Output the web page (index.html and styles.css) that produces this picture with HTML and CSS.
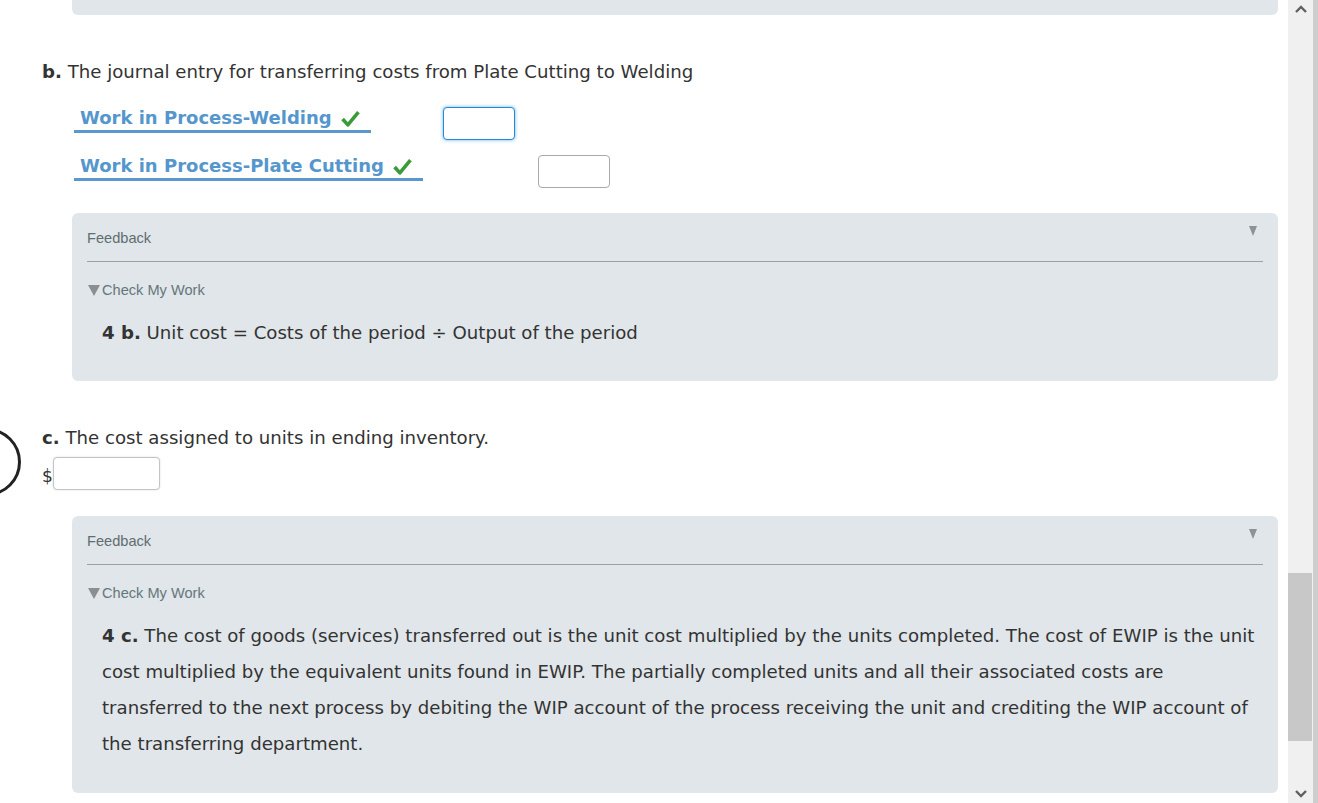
FILE: index.html
```html
<!DOCTYPE html>
<html>
<head>
<meta charset="utf-8">
<link rel="stylesheet" href="styles.css">
</head>
<body>
<div class="window">
  <div class="content">
    <div class="box-top"></div>

    <p class="question q-b"><b>b.</b> The journal entry for transferring costs from Plate Cutting to Welding</p>
    <div class="journal">
      <div class="acct"><span class="acct-label">Work in Process-Welding <svg class="check" viewBox="0 0 18 16"><path d="M1.5 8.5 L6.5 14 L16.5 2" fill="none" stroke="#3b9b3b" stroke-width="3.4" stroke-linejoin="round"/></svg></span></div>
      <div class="cell"><span class="inp focus"></span></div>
      <div class="cell"></div>
      <div class="acct"><span class="acct-label">Work in Process-Plate Cutting <svg class="check" viewBox="0 0 18 16"><path d="M1.5 8.5 L6.5 14 L16.5 2" fill="none" stroke="#3b9b3b" stroke-width="3.4" stroke-linejoin="round"/></svg></span></div>
      <div class="cell"></div>
      <div class="cell"><span class="inp"></span></div>
    </div>

    <div class="feedback fb1">
      <div class="fb-head"><span>Feedback</span><svg class="fb-tri" viewBox="0 0 8 10"><path d="M0 0 H8 L4 10 Z" fill="#8c9396"/></svg></div>
      <div class="check-my-work"><svg class="cmw-tri" viewBox="0 0 12 11"><path d="M0 0 H12 L6 11 Z" fill="#8a8f92"/></svg>Check My Work</div>
      <p class="fb-text"><b>4 b.</b> Unit cost = Costs of the period ÷ Output of the period</p>
    </div>

    <p class="question q-c"><b>c.</b> The cost assigned to units in ending inventory.</p>
    <div class="dollar-row"><span class="dollar">$</span><span class="inp wide"></span></div>

    <div class="feedback fb2">
      <div class="fb-head"><span>Feedback</span><svg class="fb-tri" viewBox="0 0 8 10"><path d="M0 0 H8 L4 10 Z" fill="#8c9396"/></svg></div>
      <div class="check-my-work"><svg class="cmw-tri" viewBox="0 0 12 11"><path d="M0 0 H12 L6 11 Z" fill="#8a8f92"/></svg>Check My Work</div>
      <p class="fb-text long"><b>4 c.</b> The cost of goods (services) transferred out is the unit cost multiplied by the units completed. The cost of EWIP is the unit cost multiplied by the equivalent units found in EWIP. The partially completed units and all their associated costs are transferred to the next process by debiting the WIP account of the process receiving the unit and crediting the WIP account of the transferring department.</p>
    </div>
  </div>

  <div class="scrollbar">
    <div class="sb-track">
      <svg class="sb-arrow" viewBox="0 0 12 8"><path d="M1 7 L6 2 L11 7" fill="none" stroke="#606060" stroke-width="2.4"/></svg>
      <div class="sb-space top"></div>
      <div class="sb-thumb"></div>
      <div class="sb-space bottom"></div>
      <svg class="sb-arrow" viewBox="0 0 12 8"><path d="M1 1 L6 6 L11 1" fill="none" stroke="#606060" stroke-width="2.4"/></svg>
    </div>
    <div class="sb-edge"></div>
  </div>

  <div class="circle"></div>
</div>
</body>
</html>
```

FILE: styles.css
```css
html, body {
  margin: 0;
  padding: 0;
  background: #ffffff;
}

.window {
  position: relative;
  width: 1318px;
  height: 803px;
  overflow: hidden;
  display: flex;
  font-family: "DejaVu Sans", Verdana, sans-serif;
  color: #333333;
}

.content {
  flex: 1;
  padding: 0 10px 0 42px;
  display: flex;
  flex-direction: column;
}

.box-top {
  margin-left: 30px;
  height: 15px;
  background: #e0e6e9;
  border-radius: 0 0 6px 6px;
}

.question {
  margin: 0;
  font-size: 18.15px;
  line-height: 20px;
}

.q-b {
  margin-top: 47px;
}

.journal {
  margin-top: 16px;
  margin-left: 32px;
  display: grid;
  grid-template-columns: 369px 95px 72px;
  grid-auto-rows: 48px;
  align-items: start;
}

.acct {
  padding-top: 9px;
}

.acct-label {
  display: inline-flex;
  align-items: center;
  gap: 9px;
  padding: 0 11px 1px 6px;
  border-bottom: 3px solid #5a98cb;
  color: #5596cc;
  font-weight: bold;
  font-size: 18px;
  line-height: 22px;
}

.check {
  width: 19px;
  height: 17px;
}

.cell {
  height: 48px;
  padding-top: 9px;
  box-sizing: border-box;
}

.inp {
  display: block;
  box-sizing: border-box;
  width: 72px;
  height: 33px;
  border: 1px solid #a9a9a9;
  border-radius: 4px;
  background: #fff;
}

.inp.focus {
  border-color: #1f8ad8;
  box-shadow: 0 0 3px 1px rgba(90, 170, 230, 0.55);
}

.inp.wide {
  width: 107px;
  border-color: #c4c4c4;
  box-shadow: 0 0 2px rgba(0,0,0,0.15);
}

.feedback {
  margin-left: 30px;
  background: #e0e6e9;
  border-radius: 6px;
  padding: 0 15px;
  font-family: "Liberation Sans", Arial, sans-serif;
}

.fb1 {
  margin-top: 19px;
  height: 168px;
}

.fb2 {
  margin-top: 26px;
  height: 277px;
}

.fb-head {
  display: flex;
  justify-content: space-between;
  align-items: flex-start;
  height: 48px;
  border-bottom: 1px solid #9aa0a3;
  color: #5f6d72;
  font-size: 14.6px;
}

.fb-head span {
  padding-top: 16px;
  line-height: 18px;
}

.fb-tri {
  width: 8px;
  height: 10px;
  margin-top: 13px;
  margin-right: 6px;
}

.check-my-work {
  margin-top: 19px;
  display: flex;
  align-items: center;
  gap: 2px;
  padding-left: 1px;
  color: #66767b;
  font-size: 14.6px;
  line-height: 18px;
}

.cmw-tri {
  width: 12px;
  height: 11px;
}

.fb-text {
  margin: 24px 0 0 15px;
  font-family: "DejaVu Sans", Verdana, sans-serif;
  color: #333333;
  font-size: 18.15px;
  line-height: 20px;
}

.fb-text.long {
  margin-top: 16px;
  line-height: 36px;
}

.q-c {
  margin-top: 47px;
}

.dollar-row {
  margin-top: 9px;
  display: flex;
  align-items: center;
}

.dollar {
  font-size: 17px;
  width: 11px;
  margin-top: 4px;
}

.scrollbar {
  width: 30px;
  display: flex;
}

.sb-track {
  width: 25px;
  background: #f0f0f0;
  display: flex;
  flex-direction: column;
  align-items: center;
}

.sb-arrow {
  width: 12px;
  height: 8px;
  margin: 5px 0;
}

.sb-space.top {
  height: 555px;
}

.sb-thumb {
  align-self: flex-start;
  width: 24px;
  height: 168px;
  background: #c8c8c8;
}

.sb-space.bottom {
  flex: 1;
}

.sb-edge {
  width: 5px;
  background: #cdcdcd;
}

.circle {
  position: absolute;
  left: -47px;
  top: 428px;
  width: 68px;
  height: 68px;
  box-sizing: border-box;
  border: 3px solid #222;
  border-radius: 50%;
}
```
